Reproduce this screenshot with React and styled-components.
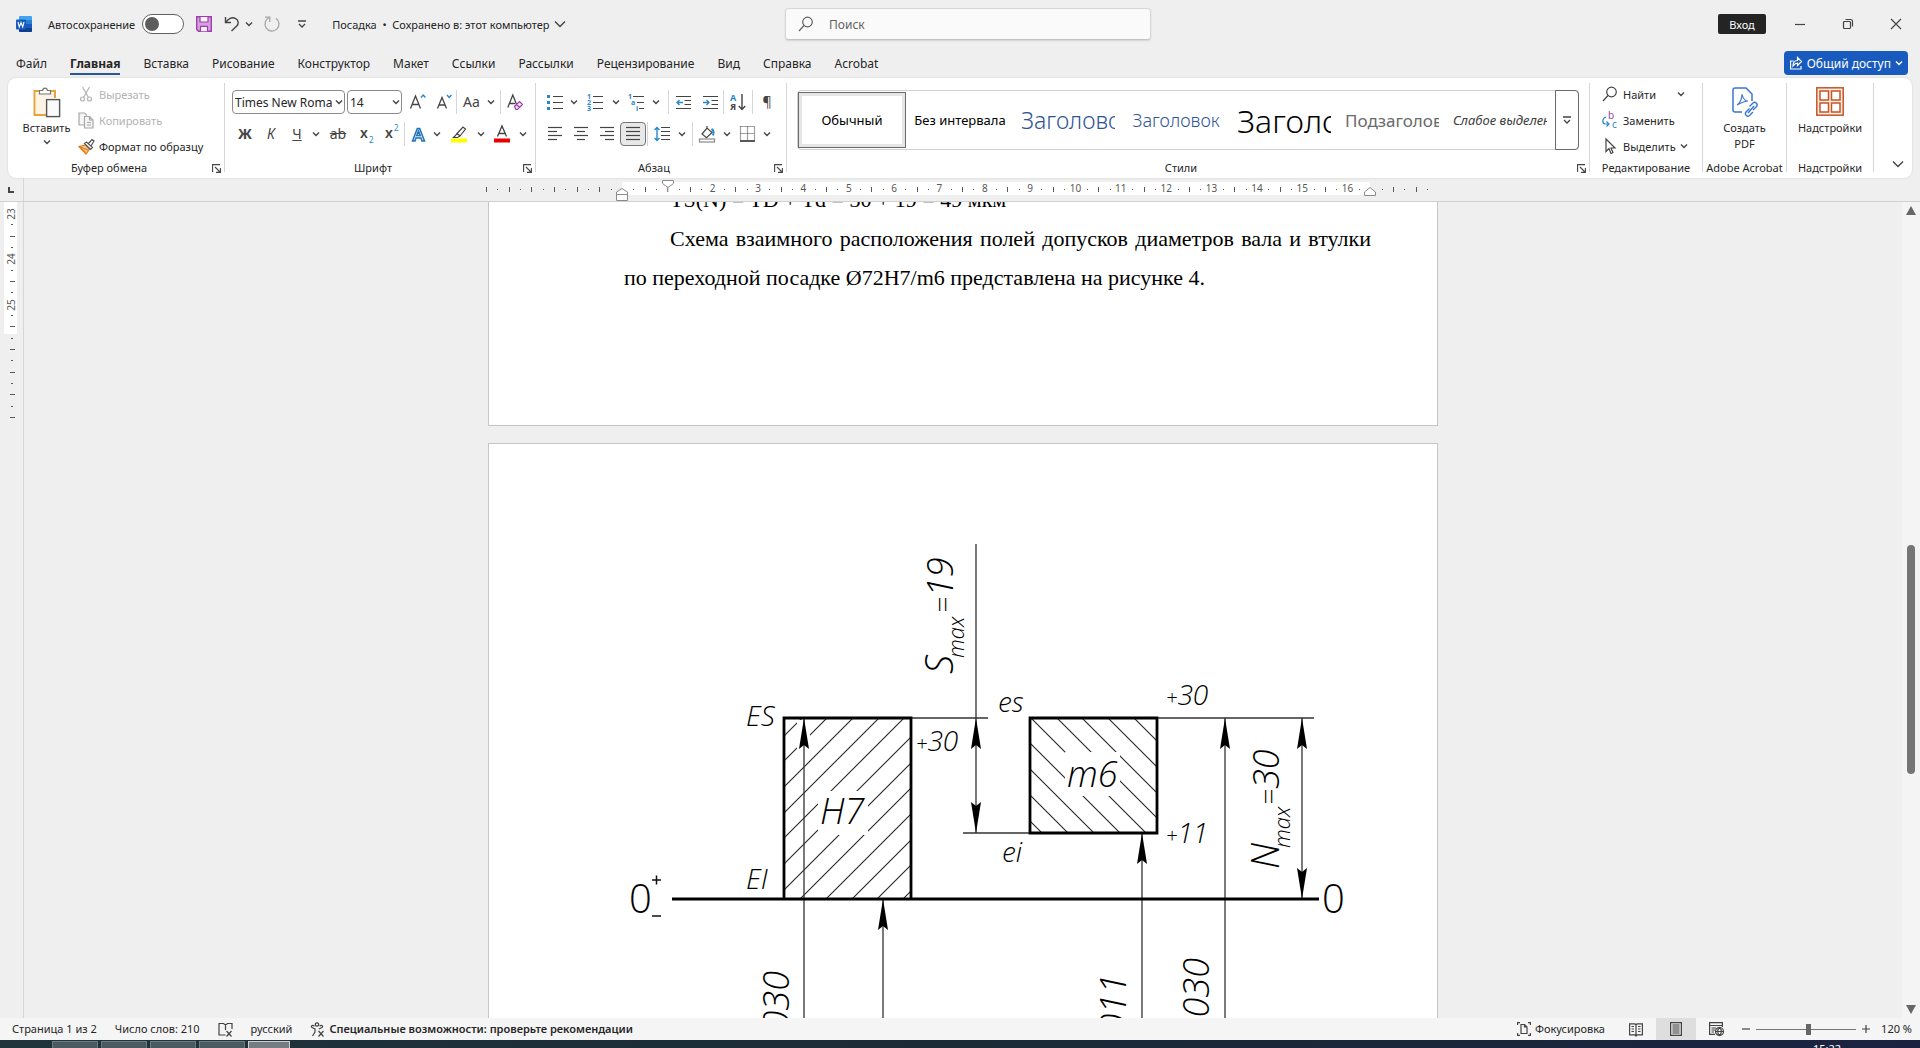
import React, { useState } from 'react';
import styled, { createGlobalStyle, css } from 'styled-components';

const GlobalStyle = createGlobalStyle`
  * {
    box-sizing: border-box;
  }
  body {
    margin: 0;
    background: #efefef;
  }
  body, button, input, select {
    font-family: 'Noto Sans', 'Open Sans', sans-serif;
    font-size: 11px;
    color: #262626;
  }
  button {
    padding: 0;
    border: 0;
    background: none;
    white-space: nowrap;
  }
  svg {
    display: block;
    flex: none;
    overflow: visible;
  }
`;

const Window = styled.div`
  display: flex;
  flex-direction: column;
  height: 100vh;
  overflow: hidden;
`;

/* ---------- title bar ---------- */

const TitleBar = styled.header`
  display: grid;
  grid-template-columns: 1fr 366px 1fr;
  align-items: center;
  height: 48px;
  padding-left: 16px;
`;

const TitleLeft = styled.div`
  display: flex;
  align-items: center;
  gap: 12px;
`;

const AutoSave = styled.label`
  display: flex;
  align-items: center;
  gap: 7px;
  margin-left: 4px;
`;

const Toggle = styled.input`
  appearance: none;
  width: 42px;
  height: 20px;
  margin: 0;
  border: 1px solid #616161;
  border-radius: 10px;
  background: #fff;

  &::before {
    content: '';
    display: block;
    width: 14px;
    height: 14px;
    margin: 2px;
    border-radius: 50%;
    background: #5c5c5c;
  }
  &:checked::before {
    margin-left: 24px;
  }
`;

const QuickButton = styled.button`
  display: flex;
  align-items: center;
  gap: 6px;
  margin-left: ${p => p.$gap || 0}px;
`;

const DocName = styled.button`
  display: flex;
  align-items: center;
  gap: 6px;
  margin-left: 14px;
`;

const SearchBox = styled.label`
  display: flex;
  align-items: center;
  gap: 13px;
  height: 32px;
  padding: 0 12px;
  border: 1px solid #d8d8d8;
  border-bottom-color: #c4c4c4;
  border-radius: 4px;
  background: #fafafa;
  box-shadow: 0 1px 2px rgba(0, 0, 0, 0.12);

  input {
    flex: 1;
    border: 0;
    outline: 0;
    background: none;
    font-size: 12px;
  }
  input::placeholder {
    color: #616161;
    opacity: 1;
  }
`;

const TitleRight = styled.div`
  display: flex;
  align-items: center;
  justify-content: flex-end;
`;

const SignIn = styled.button`
  width: 48px;
  height: 20px;
  margin-right: 10px;
  border-radius: 2px;
  background: #242424;
  color: #fff;
`;

const WindowButton = styled.button`
  display: flex;
  align-items: center;
  justify-content: center;
  width: 48px;
  height: 32px;
`;

/* ---------- tabs ---------- */

const TabBar = styled.nav`
  display: flex;
  align-items: center;
  gap: 23px;
  height: 30px;
  padding: 0 12px 0 16px;
`;

const Tab = styled.a`
  position: relative;
  margin-top: 2px;
  font-size: 12px;
  line-height: 30px;
  color: #262626;
  text-decoration: none;
  ${p => p.$active && css`
    font-weight: 700;
    &::after {
      content: '';
      position: absolute;
      left: 0;
      right: 0;
      bottom: 4px;
      height: 2px;
      background: #2b579a;
    }
  `}
`;

const Share = styled.button`
  display: flex;
  align-items: center;
  gap: 5px;
  height: 24px;
  margin-left: auto;
  padding: 0 6px;
  border-radius: 4px;
  background: #185abd;
  font-size: 12px;
  color: #fff;
`;

/* ---------- ribbon ---------- */

const Ribbon = styled.section`
  display: flex;
  height: 100px;
  margin: 0 8px;
  padding: 5px 0 6px;
  border-radius: 8px;
  background: #fff;
  box-shadow: 0 0 2px rgba(0, 0, 0, 0.15);
`;

const Group = styled.div`
  display: flex;
  flex-direction: column;
  width: ${p => (p.$w ? p.$w + 'px' : 'auto')};
  flex: ${p => (p.$w ? 'none' : '1')};
  min-width: 0;
  border-right: 1px solid #d6d6d6;
`;

const GroupBody = styled.div`
  display: flex;
  flex: 1;
  min-height: 0;
  padding: 0 ${p => p.$pad ?? 7}px;
`;

const GroupFooter = styled.div`
  display: flex;
  justify-content: center;
  position: relative;
  height: 12px;
  padding-right: ${p => (p.$launcher ? 14 : 0)}px;
  line-height: 16px;
  white-space: nowrap;
`;

const Launcher = styled.button`
  position: absolute;
  right: 3px;
  top: 4px;
`;

const BigButton = styled.button`
  display: flex;
  flex-direction: column;
  align-items: center;
  width: ${p => p.$w}px;
  padding-top: 4px;
  line-height: 16px;

  span {
    margin: 3px 0;
    white-space: pre-line;
  }
`;

const SmallStack = styled.div`
  display: flex;
  flex-direction: column;
  margin-top: -2px;
`;

const SmallButton = styled.button`
  display: flex;
  align-items: center;
  gap: 5px;
  height: 26px;
  color: ${p => (p.disabled ? '#b3b3b3' : '#262626')};
`;

const IconSlot = styled.span`
  display: flex;
  justify-content: center;
  width: 16px;
`;

const Rows = styled.div`
  display: flex;
  flex-direction: column;
  gap: 6px;
  padding-top: 6px;
`;

const ToolRow = styled.div`
  display: flex;
  align-items: center;
  height: 26px;
`;

const Tool = styled.button`
  display: flex;
  align-items: center;
  justify-content: center;
  gap: 8px;
  width: ${p => p.$w || 26}px;
  height: 24px;
  font-size: 14px;
  line-height: 24px;
  color: #444;
  ${p => p.$active && css`
    border: 1px solid #767676;
    border-radius: 4px;
    background: #e8e8e8;
  `}
`;

const Drop = styled(Tool)`
  width: 12px;
`;

const Rule = styled.span`
  width: 1px;
  height: 24px;
  margin-left: ${p => p.$gap || 0}px;
  background: #d6d6d6;
`;

const Combo = styled.label`
  display: grid;
  align-items: center;
  width: ${p => p.$w}px;
  height: 24px;
  margin-right: 2px;
  border: 1px solid #8a8a8a;
  border-radius: 4px;

  select, svg {
    grid-area: 1 / 1;
  }
  select {
    appearance: none;
    width: 100%;
    padding: 0 12px 0 2px;
    border: 0;
    background: none;
    font-size: 12px;
  }
  svg {
    justify-self: end;
    margin-right: 2px;
    pointer-events: none;
  }
`;

const Gallery = styled.div`
  display: flex;
  flex: 1;
  height: 60px;
  margin-top: 7px;
  border: 1px solid #d0d0d0;
  border-radius: 4px;
`;

const StyleItem = styled.button`
  width: 108px;
  margin: 1px 0;
  padding: 0 7px;
  overflow: hidden;
  font-size: ${p => p.$size || 13}px;
  font-weight: ${p => p.$weight || 400};
  font-style: ${p => (p.$italic ? 'italic' : 'normal')};
  color: ${p => p.$color || '#000'};

  span {
    display: block;
    overflow: hidden;
  }
  ${p => p.$active && css`
    border: 1px solid #6a6a6a;
    box-shadow: inset 0 0 0 3px #e6e6e6;
  `}
`;

const GalleryMore = styled.button`
  display: flex;
  align-items: center;
  justify-content: center;
  width: 24px;
  margin: -1px -1px -1px auto;
  border: 1px solid #6a6a6a;
  border-radius: 0 4px 4px 0;
`;

const RibbonEnd = styled.div`
  display: flex;
  align-items: flex-end;
  justify-content: center;
  width: 38px;
  padding: 0 0 3px 9px;
`;

/* ---------- document area ---------- */

const RulerRow = styled.div`
  display: flex;
  flex: none;
  height: 24px;
  border-bottom: 1px solid #d0d0d0;
`;

const RulerCorner = styled.div`
  width: 24px;
  padding: 9px 8px;
  border-right: 1px solid #d6d6d6;
`;

const RulerTrack = styled.div`
  display: flex;
  justify-content: center;
  flex: 1;
  padding-right: 18px;
`;

const Body = styled.div`
  display: flex;
  flex: 1;
  min-height: 0;
`;

const SideRuler = styled.div`
  width: 24px;
  border-right: 1px solid #d6d6d6;
`;

const Canvas = styled.main`
  display: flex;
  flex-direction: column;
  align-items: center;
  gap: 17px;
  flex: 1;
  overflow: hidden;
`;

const Page = styled.article`
  flex: none;
  width: 950px;
  border: 1px solid #c6c6c6;
  background: #fff;
`;

const PageEnd = styled(Page)`
  display: flex;
  flex-direction: column;
  justify-content: flex-end;
  height: 224px;
  padding: 0 66px 128px 135px;
  border-top: 0;
  overflow: hidden;

  p {
    margin: 0;
    flex: none;
    font-family: 'Liberation Serif', serif;
    font-size: 22px;
    line-height: 39px;
    text-indent: 46px;
    text-align: justify;
    color: #000;
  }
`;

const ScrollBar = styled.div`
  display: flex;
  flex-direction: column;
  align-items: center;
  width: 18px;
  padding: 4px 0;
  background: #f4f4f4;
`;

const ScrollTrack = styled.div`
  display: flex;
  flex-direction: column;
  flex: 1;
`;

const ScrollThumb = styled.div`
  flex: 0 0 29%;
  width: 8px;
  border-radius: 4px;
  background: #757575;
`;

const ScrollSpace = styled.div`
  flex: ${p => p.$grow};
`;

/* ---------- status bar and task bar ---------- */

const StatusBar = styled.footer`
  display: flex;
  align-items: center;
  flex: none;
  height: 22px;
  padding: 0 8px 0 12px;
  background: #f5f5f5;

  button {
    display: flex;
    align-items: center;
    gap: 4px;
    margin-right: 18px;
    line-height: 20px;
  }
`;

const Advice = styled.span`
  font-weight: 600;
`;

const StatusRight = styled.div`
  display: flex;
  align-items: center;
  gap: 6px;
  margin-left: auto;

  button {
    margin: 0;
  }
`;

const Views = styled.div`
  display: flex;
  margin-left: 5px;
`;

const ViewButton = styled.button`
  justify-content: center;
  width: 40px;
  height: 22px;
  background: ${p => (p.$active ? '#dedede' : 'none')};
`;

const Zoom = styled.input`
  appearance: none;
  width: 100px;
  height: 12px;
  margin: 0;
  background: linear-gradient(#767676, #767676) center / 100% 1px no-repeat;

  &::-webkit-slider-thumb {
    appearance: none;
    width: 5px;
    height: 11px;
    background: #666;
  }
`;

const ZoomValue = styled.button`
  justify-content: flex-end;
  width: 36px;
`;

const TaskBar = styled.div`
  display: flex;
  gap: 3px;
  flex: none;
  height: 8px;
  padding: 1px 79px 0 52px;
  overflow: hidden;
  background: linear-gradient(90deg, #20343b, #1c2a36 50%, #1a2240);
`;

const Task = styled.span`
  width: ${p => p.$w || 46}px;
  border: 1px solid ${p => (p.$active ? '#c9d0d2' : '#6c7b80')};
  border-bottom: 0;
  background: ${p => (p.$active ? '#737d82' : '#4a5a60')};
`;

const Clock = styled.time`
  margin-left: auto;
  font-size: 11px;
  line-height: 16px;
  color: #fff;
`;

/* ---------- icons ---------- */

const INK = '#444';
const BLUE = '#2b88c8';

function Icon({ w = 16, h = 16, children, color = INK }) {
  return (
    <svg width={w} height={h} viewBox={`0 0 ${w} ${h}`} fill="none" stroke={color} strokeWidth="1.2" aria-hidden="true">
      {children}
    </svg>
  );
}

const Chevron = ({ w = 6, color = INK }) => (
  <Icon w={w} h={w} color={color}>
    <path d={`M0 ${w / 4} L${w / 2} ${w * 0.75} L${w} ${w / 4}`} strokeWidth="1.4" />
  </Icon>
);

const WordLogo = () => (
  <Icon w={16} h={16}>
    <g stroke="none">
      <rect x="3" y="0" width="13" height="16" rx="1" fill="#41a5ee" />
      <rect x="3" y="4" width="13" height="4" fill="#2b7cd3" />
      <rect x="3" y="8" width="13" height="4" fill="#185abd" />
      <path d="M3 12h13v3a1 1 0 0 1-1 1H4a1 1 0 0 1-1-1z" fill="#103f91" />
      <rect x="0" y="3.500" width="10" height="10" rx="1" fill="#185abd" />
    </g>
    <path d="M2 6l1.300 5L5 6.500 6.700 11 8 6" stroke="#fff" strokeWidth="1.100" />
  </Icon>
);

const SaveIcon = () => (
  <Icon color="#9c3fa8">
    <path d="M.7.7h14.600v14.600H2.500L.7 13.500z" fill="#d7a0de" strokeWidth="1.400" />
    <path d="M4 1v5h8V1M4.500 15.300v-5h7v5" fill="#f6f0f7" />
  </Icon>
);

const UndoIcon = () => (
  <Icon><path d="M1.500 1v5.500H7M1.800 6.300C4 2.500 8 .8 11.300 2.300c3.500 1.700 3.800 5.500 1.200 8L7.500 15" strokeWidth="1.400" /></Icon>
);

const RedoIcon = () => (
  <Icon color="#a8a8a8"><path d="M1 1.200h4.800V6M5.500 1.500A7 7 0 1 0 12 2.300" strokeWidth="1.300" /></Icon>
);

const MoreIcon = () => (
  <Icon w={8} h={8}><path d="M0 1h8M1 4l3 3 3-3" strokeWidth="1.300" /></Icon>
);

const SearchIcon = ({ color = '#616161' }) => (
  <Icon color={color}><circle cx="9.500" cy="6" r="4.800" /><path d="M6 9.500L1 15" /></Icon>
);

const PasteIcon = () => (
  <Icon w={28} h={30}>
    <path d="M7 4H1.500v24H13M17 4h5v7" stroke="#e8a33d" strokeWidth="2" />
    <path d="M3 6h18v5h-8v16H3z" fill="#fbf3e4" stroke="none" />
    <path d="M6.500 7V3.500h3.200a2.300 2.300 0 0 1 4.600 0h3.200V7z" fill="#fff" stroke="#777" />
    <rect x="13.600" y="12.600" width="13" height="17" fill="#fafafa" stroke="#555" strokeWidth="1.400" />
  </Icon>
);

const CutIcon = () => (
  <Icon color="#b3b3b3"><path d="M4.500 1l6 10.500M11.500 1l-6 10.500" /><circle cx="4.500" cy="13" r="2" /><circle cx="11.500" cy="13" r="2" /></Icon>
);

const CopyIcon = () => (
  <Icon color="#a8a8a8">
    <path d="M6 13H1V1h5.500l2.500 2.500" fill="#f5f5f5" />
    <path d="M6.500 4.500h5l3.500 3.500v8H6.500zM11.500 4.500V8H15M9 10.500h4M9 13h4" fill="#f5f5f5" />
  </Icon>
);

const PainterIcon = () => (
  <Icon>
    <path d="M1 8.500l6.500-1.500 4 4L8 16z" fill="#f6c58a" stroke="#e07b1a" />
    <path d="M3 11l4 3M1 8.500l9 3.500" stroke="#e07b1a" />
    <path d="M6.500 5.500l2-1.500 6 5.500-2 2zM10.500 5.500L14 1.500l2 1.500-3 5" fill="#fff" stroke="#555" />
  </Icon>
);

const LauncherIcon = () => (
  <Icon w={9} h={9}><path d="M8 .6H.6V8M3 3l5 5M8.400 4v4.400H4" strokeWidth="1.100" /></Icon>
);

const GrowIcon = ({ down }) => (
  <Icon w={16} h={16}>
    {down
      ? <path d="M1.500 14.500L6 3.500l4.500 11M3 11h6" strokeWidth="1.300" />
      : <path d="M.5 14.500L5.500 2l5 12.500M2.300 10.500h6.400" strokeWidth="1.300" />}
    <path d={down ? 'M11 1l2.200 2.500L15.400 1' : 'M11 3.500L13.200 1l2.200 2.500'} stroke={BLUE} strokeWidth="1.400" />
  </Icon>
);

const ClearIcon = () => (
  <Icon>
    <path d="M.8 13.500L5.800 1l4 10M2.500 9.500H8" strokeWidth="1.300" />
    <path d="M7.500 12.500l5-5 3 3-5 5h-1.500zM9.500 10.500l3 3" fill="#f3e3f6" stroke="#9c3fa8" />
  </Icon>
);

const EffectsIcon = () => (
  <Icon w={15} h={15}>
    <path d="M1.500 14L6.300 1.500h2.400L13.500 14h-2.600l-1-3H5l-1 3zM5.800 8.500h3.400L7.500 4z" fill="#d5e8f7" stroke="#2274b9" strokeWidth="1.500" />
  </Icon>
);

const MarkerIcon = () => (
  <Icon>
    <path d="M6 7.500l6-6.500 2.500 2-5.500 7zM6 7.500L4 10l-1.500 1.500h4L9 10" />
    <rect x="0" y="12.500" width="16" height="4" fill="#ffff00" stroke="none" />
  </Icon>
);

const FontColorIcon = () => (
  <Icon>
    <path d="M3.500 10.500L8 0l4.500 10.500M5 7.500h6" strokeWidth="1.300" />
    <rect x="0" y="12.500" width="16" height="4" fill="#e60000" stroke="none" />
  </Icon>
);

const BulletsIcon = () => (
  <Icon>
    <path d="M6 2.500h10M6 8.500h10M6 14.500h10" />
    <path d="M0 1h3v3H0zM0 7h3v3H0zM0 13h3v3H0z" fill={BLUE} stroke="none" />
  </Icon>
);

const ListText = styled.text`
  font-size: 7px;
  font-weight: 700;
  fill: ${BLUE};
  stroke: none;
`;

const NumbersIcon = () => (
  <Icon>
    <path d="M6 2.500h10M6 8.500h10M6 14.500h10" />
    <ListText x="0" y="5">1</ListText>
    <ListText x="0" y="11">2</ListText>
    <ListText x="0" y="17">3</ListText>
  </Icon>
);

const MultiIcon = () => (
  <Icon>
    <path d="M5 2.500h11M9 8.500h7M11 14.500h5" />
    <ListText x="0" y="5">1</ListText>
    <ListText x="3" y="11">a</ListText>
    <ListText x="8" y="17">i</ListText>
  </Icon>
);

const IndentIcon = ({ out }) => (
  <Icon w={15}>
    <path d="M0 2.500h15M8.500 6.500h6.500M8.500 10.500h6.500M0 14.500h15" />
    <path d={out ? 'M7 8.500H1M3.500 6L1 8.500l2.500 2.500' : 'M0 8.500h6M3.500 6L6 8.500l-2.500 2.500'} stroke={BLUE} strokeWidth="1.400" />
  </Icon>
);

const SortIcon = () => (
  <Icon>
    <text x="0" y="7" fontSize="9" fontWeight="700" fill={BLUE} stroke="none">А</text>
    <text x="0" y="16" fontSize="9" fontWeight="700" fill={INK} stroke="none">Я</text>
    <path d="M12 0v15M8.800 12l3.200 3.500 3.200-3.500" strokeWidth="1.400" />
  </Icon>
);

const AlignIcon = ({ rows }) => (
  <Icon w={14}>
    {rows.map(([x, w], i) => <path key={i} d={`M${x} ${1.5 + i * 4}h${w}`} />)}
  </Icon>
);

const SpacingIcon = () => (
  <Icon>
    <path d="M7 1.500h9M7 5.500h9M7 9.500h9M7 13.500h9" />
    <path d="M3 1.500v13M.5 4L3 1.500 5.500 4M.5 12L3 14.500 5.500 12" stroke={BLUE} strokeWidth="1.400" />
  </Icon>
);

const FillIcon = () => (
  <Icon>
    <path d="M3 8l5-6 5 4.500-5.500 5.200zM8 2V0" />
    <path d="M12.500 3c2 1 2.500 3.500 1.500 6.500" stroke={BLUE} strokeWidth="2" />
    <rect x=".5" y="13" width="15" height="3" fill="#fff" stroke="#8a8a8a" />
  </Icon>
);

const BordersIcon = () => (
  <Icon w={15}>
    <path d="M.5 .5h14M.5 .5v14M14.500 .5v14M7.500 .5v14M.5 7.500h14" strokeDasharray="1 1" />
    <path d="M0 15h15" stroke="#222" strokeWidth="1.500" />
  </Icon>
);

const ReplaceIcon = () => (
  <Icon>
    <text x="6" y="7" fontSize="10" fill="#9c3fa8" stroke="none">b</text>
    <text x="10" y="16" fontSize="10" fill={BLUE} stroke="none">c</text>
    <path d="M4 5C0 6 0 11.500 3 12h4M4.500 9.500L7 12l-2.500 2.500" stroke={BLUE} />
  </Icon>
);

const PointerIcon = () => (
  <Icon><path d="M4 1v12.500l3-3 2 5 2-1-2-4.500h4z" fill="#fff" /></Icon>
);

const PdfIcon = () => (
  <Icon w={26} h={30} color="#3c76d2">
    <path d="M10 25H3a2 2 0 0 1-2-2V3a2 2 0 0 1 2-2h11l6 6v7" strokeWidth="1.500" />
    <path d="M5 18c4-3 5-7 5-11 1 5 3 7 6 7-4 0-7 2-11 4z" strokeWidth="1.100" />
    <path d="M17.500 19.500l3.500-3.500c2-2 5.500 1 3.500 3.500L21 23M17.500 21.500L14 25c-2 2.500 1.500 5.500 3.500 3.500L21 25M16 26l6-7" strokeWidth="1.400" />
  </Icon>
);

const AddinsIcon = () => (
  <Icon w={28} h={30} color="#c5562a">
    <rect x=".8" y=".8" width="26.400" height="27.400" fill="#fbe9da" strokeWidth="1.500" />
    <path d="M4 4h8.500v9H4zM15.500 4H24v9h-8.500zM4 16h8.500v9H4zM15.500 16H24v9h-8.500z" fill="#fff" strokeWidth="1.500" />
  </Icon>
);

const ShareIcon = () => (
  <Icon w={12} h={14} color="#fff">
    <path d="M3.500 5H.6v8H11v-3M3 10c0-4 2-5.500 4.500-5.500V1.500l4 4-4 4V7C6 7 4.500 8 3 10z" />
  </Icon>
);

const ProofIcon = () => (
  <Icon w={15} h={15}><path d="M7.500 13H1V1.500h4.500L7.500 3l2-1.500H14V7M7.500 3v5M8.500 9l5 5.500M13.500 9l-5 5.500" /></Icon>
);

const AccessIcon = () => (
  <Icon w={15} h={15}>
    <circle cx="7" cy="2.500" r="1.700" />
    <path d="M4.500 4C2 2.500 0 4.500 2.500 5.800L5 7v3l-2.500 4M9.500 4c2.500-1.500 4.500.5 2 1.800L9 7M8.500 9l5 5.500M13.500 9l-5 5.500" />
  </Icon>
);

const FocusIcon = () => (
  <Icon w={14} h={14}><path d="M3 .6H.6V3M11 .6h2.400V3M3 13.400H.6V11M11 13.400h2.400V11M4 2.500h3.500L10 5v6.500H4zM7.500 2.500V5H10" /></Icon>
);

const ReadIcon = () => (
  <Icon w={14} h={13}><path d="M7 2v11M7 2L6 .8H.6v11H6L7 13l1-1.200h5.400V.8H8zM2.500 3.500H5M2.500 6H5M2.500 8.500H5M9 3.500h2.500M9 6h2.500M9 8.500h2.500" /></Icon>
);

const PrintIcon = () => (
  <Icon w={12} h={14}><path d="M.6.6h10.800v12.800H.6zM2.500 3h7M2.500 5h7M2.500 7h7M2.500 9h7M2.500 11h7" /></Icon>
);

const WebIcon = () => (
  <Icon w={15} h={14}>
    <path d="M6 12.400H.6V.6h12.800V5M.6 3.500h12.800M2.500 6H7M2.500 8H6M2.500 10H5" />
    <circle cx="10.500" cy="9.500" r="4" fill="#f5f5f5" />
    <path d="M6.500 9.500h8M10.500 5.500c-2.500 2.500-2.500 5.500 0 8 2.500-2.500 2.500-5.500 0-8z" />
  </Icon>
);

/* ---------- rulers ---------- */

// one centimetre on screen at 120 %
const CM = 45.35;

const RulerMark = styled.text`
  font-size: 10px;
  text-anchor: middle;
  fill: #595959;
`;

function HorizontalRuler() {
  const quarters = [];
  for (let q = -12; q <= 71; q++) {
    if (q !== 0 && q !== 66) quarters.push(q);
  }
  return (
    <svg width="950" height="23" viewBox="0 0 950 23" aria-hidden="true">
      <rect x="134" y="4" width="748" height="13" fill="#fff" />
      {quarters.map(q => {
        const x = 134 + (q * CM) / 4;
        if (q > 0 && q < 66 && q % 4 === 0) {
          return <RulerMark key={q} x={x} y="14">{q / 4}</RulerMark>;
        }
        return q % 2 === 0
          ? <rect key={q} x={Math.round(x)} y="9" width="1" height="5" fill="#595959" />
          : <rect key={q} x={Math.round(x)} y="11" width="1" height="1" fill="#595959" />;
      })}
      <g fill="#fff" stroke="#8a8a8a">
        <path d="M174.500 2.500h11v3l-5.500 4-5.500-4z" />
        <path d="M128.500 22.500v-8.500l5.500-3.500 5.500 3.500v8.500zM128.500 16.500h11" />
        <path d="M876.500 17.500v-3.500l5.500-4.500 5.500 4.500v3.500z" />
      </g>
    </svg>
  );
}

function VerticalRuler() {
  const marks = [];
  for (let q = 1; q <= 18; q++) marks.push(q);
  return (
    <svg width="23" height="230" viewBox="0 0 23 230" aria-hidden="true">
      <rect x="4" y="0" width="13" height="132" fill="#fff" />
      <RulerMark transform="translate(15 12) rotate(-90)">23</RulerMark>
      {marks.map(q => {
        const y = Math.round(12 + (q * CM) / 4);
        if (q === 4 || q === 8) {
          return <RulerMark key={q} transform={`translate(15 ${y}) rotate(-90)`}>{23 + q / 4}</RulerMark>;
        }
        return q % 2 === 0
          ? <rect key={q} x="10" y={y - 1} width="5" height="1" fill="#595959" />
          : <rect key={q} x="11" y={y - 1} width="2" height="1" fill="#595959" />;
      })}
    </svg>
  );
}

/* ---------- tolerance diagram ---------- */

const Label = styled.text`
  font-family: 'Open Sans', sans-serif;
  font-size: ${p => p.$size || 28}px;
  font-style: ${p => (p.$upright ? 'normal' : 'italic')};
  font-weight: 300;
  fill: #000;
`;

const Sign = styled.tspan`
  font-size: ${p => p.$size || 20}px;
`;

const arrow = (x, y, dir) =>
  `M${x} ${y}L${x - 5} ${y + 31 * dir}L${x} ${y + 27 * dir}L${x + 5} ${y + 31 * dir}Z`;

const H7_HATCH = [736, 761, 787, 813, 838, 864, 890, 915, 941, 967, 992, 1018];
const M6_HATCH = [847, 821, 795, 769, 743, 717, 692, 666, 640];

function ToleranceDiagram() {
  return (
    <svg width="948" height="574" viewBox="489 444 948 574" role="img" aria-label="H7 / m6">
      <clipPath id="h7"><rect x="785" y="719" width="126" height="180" /></clipPath>
      <clipPath id="m6"><rect x="1031" y="719" width="126" height="114" /></clipPath>
      <g stroke="#222" strokeWidth="1.1">
        <g clipPath="url(#h7)">
          {H7_HATCH.map(y => <path key={y} d={`M784 ${y}l200 -200`} />)}
        </g>
        <g clipPath="url(#m6)">
          {M6_HATCH.map(y => <path key={y} d={`M1030 ${y - 26}l200 200`} />)}
        </g>
      </g>
      <path d="M818 791h50v44h-50zM797 720h13v29h-13zM1065 752h55v44h-55z" fill="#fff" />

      <g fill="none" stroke="#333" strokeWidth="1.3">
        <path d="M976 544V833M911 718H988M963 833H1030M1157 718H1314M1302 718V899" />
        <path d="M804 718V1018M883 899V1018M1142 833V1018M1225 718V1018" />
      </g>
      <g fill="none" stroke="#000" strokeWidth="2.8">
        <path d="M784 899V718H911V899M1030 718H1157V833H1030Z" />
        <path d="M672 899H1319" />
      </g>
      <path
        fill="#000"
        d={[
          arrow(976, 718, 1), arrow(976, 833, -1), arrow(804, 718, 1), arrow(883, 899, 1),
          arrow(1142, 833, 1), arrow(1225, 718, 1), arrow(1302, 718, 1), arrow(1302, 899, -1),
        ].join('')}
      />

      <Label x="746" y="726">ES</Label>
      <Label x="746" y="889">EI</Label>
      <Label x="916" y="751"><Sign>+</Sign>30</Label>
      <Label x="998" y="712">es</Label>
      <Label x="1002" y="862">ei</Label>
      <Label x="1166" y="705"><Sign>+</Sign>30</Label>
      <Label x="1166" y="843"><Sign>+</Sign>11</Label>
      <Label x="820" y="824" $size={36}>H7</Label>
      <Label x="1067" y="787" $size={36}>m6</Label>
      <Label x="629" y="913" $size={40} $upright>0</Label>
      <Label x="1322" y="913" $size={40} $upright>0</Label>
      <path d="M652 880h9M656.500 875.500v9M652 916h9" stroke="#111" strokeWidth="1.500" />

      <Label transform="translate(953 674) rotate(-90)" $size={38}>S</Label>
      <Label transform="translate(964 658) rotate(-90)" $size={22}>max</Label>
      <Label transform="translate(953 613) rotate(-90)" $size={36}><Sign $size={28}>=</Sign>19</Label>
      <Label transform="translate(1279 869) rotate(-90)" $size={38}>N</Label>
      <Label transform="translate(1290 848) rotate(-90)" $size={22}>max</Label>
      <Label transform="translate(1279 805) rotate(-90)" $size={36}><Sign $size={28}>=</Sign>30</Label>
      <Label transform="translate(789 971) rotate(-90)" $size={36} textAnchor="end">030</Label>
      <Label transform="translate(1126 974) rotate(-90)" $size={36} textAnchor="end">011</Label>
      <Label transform="translate(1209 958) rotate(-90)" $size={36} textAnchor="end">030</Label>
    </svg>
  );
}

/* ---------- app ---------- */

const TABS = [
  'Файл', 'Главная', 'Вставка', 'Рисование', 'Конструктор', 'Макет', 'Ссылки',
  'Рассылки', 'Рецензирование', 'Вид', 'Справка', 'Acrobat',
];

const STYLES = [
  { name: 'Обычный' },
  { name: 'Без интервала' },
  { name: 'Заголовок', size: 23, weight: 300, color: '#2f5496' },
  { name: 'Заголовок', size: 18, weight: 300, color: '#2f5496' },
  { name: 'Заголовок', size: 32, weight: 300, color: '#000' },
  { name: 'Подзаголовок', size: 17, color: '#6a6a6a' },
  { name: 'Слабое выделение', italic: true, color: '#404040' },
];

function Footer({ label, launcher }) {
  return (
    <GroupFooter $launcher={launcher}>
      {label}
      {launcher && <Launcher aria-label={label}><LauncherIcon /></Launcher>}
    </GroupFooter>
  );
}

function App() {
  const [tab, setTab] = useState('Главная');
  const [style, setStyle] = useState(0);
  const [zoom, setZoom] = useState(53);

  return (
    <Window>
      <GlobalStyle />
      <TitleBar>
        <TitleLeft>
          <WordLogo />
          <AutoSave>
            Автосохранение
            <Toggle type="checkbox" />
          </AutoSave>
          <QuickButton aria-label="Сохранить"><SaveIcon /></QuickButton>
          <QuickButton aria-label="Отменить"><UndoIcon /><Chevron /></QuickButton>
          <QuickButton aria-label="Повторить"><RedoIcon /></QuickButton>
          <QuickButton $gap={6} aria-label="Настройка"><MoreIcon /></QuickButton>
          <DocName>Посадка&nbsp; •&nbsp; Сохранено в: этот компьютер <Chevron w={10} /></DocName>
        </TitleLeft>
        <SearchBox>
          <SearchIcon />
          <input type="text" placeholder="Поиск" />
        </SearchBox>
        <TitleRight>
          <SignIn>Вход</SignIn>
          <WindowButton aria-label="Свернуть"><Icon w={10} h={10}><path d="M0 5.500h10" /></Icon></WindowButton>
          <WindowButton aria-label="Окно">
            <Icon w={10} h={10}><rect x=".5" y="2.500" width="7" height="7" rx="1" /><path d="M2.500 .5h5a2 2 0 0 1 2 2v5" /></Icon>
          </WindowButton>
          <WindowButton aria-label="Закрыть"><Icon w={10} h={10}><path d="M0 0l10 10M10 0L0 10" /></Icon></WindowButton>
        </TitleRight>
      </TitleBar>

      <TabBar>
        {TABS.map(t => (
          <Tab key={t} href="#" $active={t === tab} onClick={() => setTab(t)}>{t}</Tab>
        ))}
        <Share><ShareIcon />Общий доступ<Chevron color="#fff" /></Share>
      </TabBar>

      <Ribbon>
        <Group $w={217}>
          <GroupBody>
            <BigButton $w={63}><PasteIcon /><span>Вставить</span><Chevron /></BigButton>
            <SmallStack>
              <SmallButton disabled><IconSlot><CutIcon /></IconSlot>Вырезать</SmallButton>
              <SmallButton disabled><IconSlot><CopyIcon /></IconSlot>Копировать</SmallButton>
              <SmallButton><IconSlot><PainterIcon /></IconSlot>Формат по образцу</SmallButton>
            </SmallStack>
          </GroupBody>
          <Footer label="Буфер обмена" launcher />
        </Group>

        <Group $w={311}>
          <GroupBody>
            <Rows>
              <ToolRow>
                <Combo $w={113}>
                  <select aria-label="Шрифт"><option>Times New Roman</option></select>
                  <Chevron />
                </Combo>
                <Combo $w={55}>
                  <select aria-label="Размер шрифта"><option>14</option></select>
                  <Chevron />
                </Combo>
                <Tool $w={28} aria-label="Увеличить"><GrowIcon /></Tool>
                <Tool $w={24} aria-label="Уменьшить"><GrowIcon down /></Tool>
                <Rule />
                <Tool $w={43}>Aa<Chevron /></Tool>
                <Rule />
                <Tool $w={28} aria-label="Очистить"><ClearIcon /></Tool>
              </ToolRow>
              <ToolRow>
                <Tool><b>Ж</b></Tool>
                <Tool><i>К</i></Tool>
                <Tool><u>Ч</u></Tool>
                <Drop aria-label="Подчёркивание"><Chevron /></Drop>
                <Tool $w={32}><s>ab</s></Tool>
                <Tool aria-label="Подстрочный">
                  <Icon>
                    <text x="1" y="12" fontSize="14" fontWeight="600" fill={INK} stroke="none">x</text>
                    <text x="10" y="17" fontSize="8" fill={BLUE} stroke="none">2</text>
                  </Icon>
                </Tool>
                <Tool $w={24} aria-label="Надстрочный">
                  <Icon>
                    <text x="1" y="12" fontSize="14" fontWeight="600" fill={INK} stroke="none">x</text>
                    <text x="10" y="5" fontSize="8" fill={BLUE} stroke="none">2</text>
                  </Icon>
                </Tool>
                <Rule />
                <Tool aria-label="Эффекты"><EffectsIcon /></Tool>
                <Drop aria-label="Эффекты"><Chevron /></Drop>
                <Tool $w={32} aria-label="Выделение"><MarkerIcon /></Tool>
                <Drop aria-label="Выделение"><Chevron /></Drop>
                <Tool $w={30} aria-label="Цвет"><FontColorIcon /></Tool>
                <Drop aria-label="Цвет"><Chevron /></Drop>
              </ToolRow>
            </Rows>
          </GroupBody>
          <Footer label="Шрифт" launcher />
        </Group>

        <Group $w={251}>
          <GroupBody $pad={6}>
            <Rows>
              <ToolRow>
                <Tool aria-label="Маркеры"><BulletsIcon /></Tool>
                <Drop aria-label="Маркеры"><Chevron /></Drop>
                <Tool $w={30} aria-label="Нумерация"><NumbersIcon /></Tool>
                <Drop aria-label="Нумерация"><Chevron /></Drop>
                <Tool $w={28} aria-label="Список"><MultiIcon /></Tool>
                <Drop aria-label="Список"><Chevron /></Drop>
                <Rule $gap={6} />
                <Tool $w={28} aria-label="Уменьшить отступ"><IndentIcon out /></Tool>
                <Tool aria-label="Увеличить отступ"><IndentIcon /></Tool>
                <Rule />
                <Tool $w={28} aria-label="Сортировка"><SortIcon /></Tool>
                <Rule />
                <Tool $w={28}>¶</Tool>
              </ToolRow>
              <ToolRow>
                <Tool aria-label="По левому краю"><AlignIcon rows={[[0, 14], [0, 9], [0, 14], [0, 9]]} /></Tool>
                <Tool aria-label="По центру"><AlignIcon rows={[[0, 14], [3, 8], [0, 14], [3, 8]]} /></Tool>
                <Tool aria-label="По правому краю"><AlignIcon rows={[[0, 14], [5, 9], [0, 14], [5, 9]]} /></Tool>
                <Tool $active aria-label="По ширине"><AlignIcon rows={[[0, 14], [0, 14], [0, 14], [0, 14]]} /></Tool>
                <Rule $gap={1} />
                <Tool $w={28} aria-label="Интервал"><SpacingIcon /></Tool>
                <Drop aria-label="Интервал"><Chevron /></Drop>
                <Rule $gap={4} />
                <Tool $w={28} aria-label="Заливка"><FillIcon /></Tool>
                <Drop aria-label="Заливка"><Chevron /></Drop>
                <Tool $w={28} aria-label="Границы"><BordersIcon /></Tool>
                <Drop aria-label="Границы"><Chevron /></Drop>
              </ToolRow>
            </Rows>
          </GroupBody>
          <Footer label="Абзац" launcher />
        </Group>

        <Group>
          <GroupBody $pad={10}>
            <Gallery>
              {STYLES.map((s, i) => (
                <StyleItem
                  key={i}
                  $active={i === style}
                  $size={s.size}
                  $weight={s.weight}
                  $color={s.color}
                  $italic={s.italic}
                  onClick={() => setStyle(i)}
                >
                  <span>{s.name}</span>
                </StyleItem>
              ))}
              <GalleryMore aria-label="Стили"><MoreIcon /></GalleryMore>
            </Gallery>
          </GroupBody>
          <Footer label="Стили" launcher />
        </Group>

        <Group $w={113}>
          <GroupBody $pad={12}>
            <SmallStack>
              <SmallButton><IconSlot><SearchIcon color={INK} /></IconSlot>Найти&emsp;&ensp;<Chevron /></SmallButton>
              <SmallButton><IconSlot><ReplaceIcon /></IconSlot>Заменить</SmallButton>
              <SmallButton><IconSlot><PointerIcon /></IconSlot>Выделить<Chevron /></SmallButton>
            </SmallStack>
          </GroupBody>
          <Footer label="Редактирование" />
        </Group>

        <Group $w={84}>
          <GroupBody $pad={0}>
            <BigButton $w={84}><PdfIcon /><span>{'Создать\nPDF'}</span></BigButton>
          </GroupBody>
          <Footer label="Adobe Acrobat" />
        </Group>

        <Group $w={87}>
          <GroupBody $pad={0}>
            <BigButton $w={87}><AddinsIcon /><span>Надстройки</span></BigButton>
          </GroupBody>
          <Footer label="Надстройки" />
        </Group>

        <RibbonEnd><button aria-label="Свернуть ленту"><Chevron w={10} /></button></RibbonEnd>
      </Ribbon>

      <RulerRow>
        <RulerCorner><Icon w={6} h={6}><path d="M1 0v5h5" strokeWidth="2" /></Icon></RulerCorner>
        <RulerTrack><HorizontalRuler /></RulerTrack>
      </RulerRow>

      <Body>
        <SideRuler><VerticalRuler /></SideRuler>
        <Canvas>
          <PageEnd>
            <p>TS(N) = TD + Td = 30 + 19 = 49 мкм</p>
            <p>
              Схема взаимного расположения полей допусков диаметров вала и втулки
              по переходной посадке Ø72H7/m6 представлена на рисунке 4.
            </p>
          </PageEnd>
          <Page><ToleranceDiagram /></Page>
        </Canvas>
        <ScrollBar>
          <Icon w={10} h={9}><path d="M5 0l5 9H0z" fill="#666" stroke="none" /></Icon>
          <ScrollTrack>
            <ScrollSpace $grow={328} />
            <ScrollThumb />
            <ScrollSpace $grow={230} />
          </ScrollTrack>
          <Icon w={10} h={9}><path d="M0 0h10L5 9z" fill="#666" stroke="none" /></Icon>
        </ScrollBar>
      </Body>

      <StatusBar>
        <button>Страница 1 из 2</button>
        <button>Число слов: 210</button>
        <button aria-label="Правописание"><ProofIcon /></button>
        <button>русский</button>
        <button><AccessIcon /><Advice>Специальные возможности: проверьте рекомендации</Advice></button>
        <StatusRight>
          <button><FocusIcon />Фокусировка</button>
          <Views>
            <ViewButton aria-label="Режим чтения"><ReadIcon /></ViewButton>
            <ViewButton $active aria-label="Разметка страницы"><PrintIcon /></ViewButton>
            <ViewButton aria-label="Веб-документ"><WebIcon /></ViewButton>
          </Views>
          <button aria-label="Уменьшить масштаб"><Icon w={8} h={8}><path d="M0 4h8" /></Icon></button>
          <Zoom type="range" aria-label="Масштаб" value={zoom} onChange={e => setZoom(e.target.value)} />
          <button aria-label="Увеличить масштаб"><Icon w={8} h={8}><path d="M0 4h8M4 0v8" /></Icon></button>
          <ZoomValue>120 %</ZoomValue>
        </StatusRight>
      </StatusBar>

      <TaskBar>
        <Task />
        <Task />
        <Task />
        <Task />
        <Task $active $w={42} />
        <Clock>15:22</Clock>
      </TaskBar>
    </Window>
  );
}

export default App;
